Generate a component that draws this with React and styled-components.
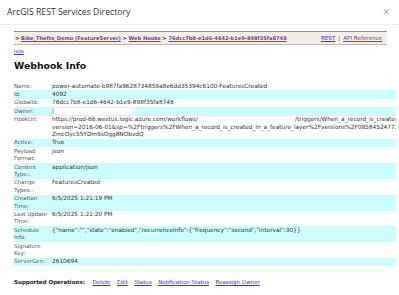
import React from "react";
import styled, { createGlobalStyle } from "styled-components";

const Global = createGlobalStyle`
  html, body { margin: 0; padding: 0; background: #fff; }
  body { width: 399px; height: 295px; overflow: hidden; }
`;

const Dialog = styled.div`
  width: 399px;
  height: 295px;
  display: flex;
  flex-direction: column;
  font-family: "DejaVu Sans", Verdana, sans-serif;
`;

const TitleBar = styled.div`
  height: 25px;
  box-sizing: border-box;
  border-bottom: 1px solid #ececec;
  display: flex;
  align-items: center;
  justify-content: space-between;
  padding: 0 9px 0 7px;
  font-family: "Open Sans", "Liberation Sans", sans-serif;
  font-size: 8.7px;
  color: #333;
`;

const Close = styled.span`
  font-size: 9px;
  color: #aaa;
  font-family: "DejaVu Sans", sans-serif;
`;

const Body = styled.div`
  padding: 6px 0 0 14px;
  display: flex;
  flex-direction: column;
`;

const Crumbs = styled.div`
  width: 373px;
  height: 14px;
  box-sizing: border-box;
  background: #f4eee6;
  border-top: 1.5px solid #8c8c8c;
  border-bottom: 1px solid #b8b8b8;
  display: flex;
  align-items: center;
  justify-content: space-between;
  padding: 0 5px 0 1px;
  font-size: 5.1px;
`;

const CrumbPath = styled.span`
  font-weight: bold;
  color: #222;
`;

const Link = styled.a`
  color: ${(p) => (p.$visited ? "#6b3fa0" : "#3333ee")};
  text-decoration: underline;
  font-weight: ${(p) => (p.$bold ? "bold" : "normal")};
`;

const RightLinks = styled.span`
  font-size: 5.6px;
`;

const Sep = styled.span`
  color: #555;
  margin: 0 3px;
`;

const JsonLink = styled.a`
  margin-top: 3.5px;
  font-size: 4px;
  color: #3333ee;
  text-decoration: underline;
  align-self: flex-start;
`;

const Heading = styled.h2`
  margin: 6px 0 0 0;
  font-size: 9.3px;
  font-weight: bold;
  color: #111;
  line-height: 11px;
`;

const Table = styled.table`
  margin-top: 11.5px;
  width: 382px;
  table-layout: fixed;
  border-collapse: collapse;
  font-size: 5.8px;
  color: #333;
`;

const Row = styled.tr`
  background: ${(p) => (p.$alt ? "#ccffff" : "transparent")};
`;

const Label = styled.td`
  width: 38px;
  padding: 0.5px 0;
  line-height: 7.4px;
  vertical-align: top;
  color: #555;
  white-space: nowrap;
  font-size: 5.5px;
`;

const Value = styled.td`
  padding: 0.5px 0 0.5px 0;
  line-height: 7.4px;
  vertical-align: top;
  white-space: nowrap;
  overflow: hidden;
`;

const OwnerBox = styled.span`
  display: inline-block;
  background: #fff;
  width: 81px;
  height: 7.4px;
  vertical-align: top;
`;

const Gap = styled.span`
  display: inline-block;
  width: ${(p) => p.$w}px;
`;

const Ops = styled.div`
  margin-top: 13px;
  font-size: 5.5px;
  display: flex;
  gap: 6.5px;
  align-items: baseline;
`;

const OpsLabel = styled.span`
  font-weight: bold;
  color: #222;
  margin-right: 1px;
`;

const hook = (
  <>
    https://prod-66.westus.logic.azure.com/workflows/
    <Gap $w={97} />
    /triggers/When_a_record_is_created_in_a_feature_layer/paths/invoke
    <br />
    version=2016-06-01&amp;sp=%2Ftriggers%2FWhen_a_record_is_created_in_a_feature_layer%2Fversions%2F085845247722
    <br />
    ZmcOyc5SYDm9sOgg8NObvdQ
  </>
);

const rows = [
  ["Name:", "power-automate-b987fa9628734859a8e6dd35394c6100-FeaturesCreated"],
  ["Id:", "4092"],
  ["GlobalId:", "76dcc7b8-e1d6-4642-b1e9-898f35fa8748"],
  ["Owner:", "__owner__"],
  ["HookUrl:", "__hook__"],
  ["Active:", "True"],
  [["Payload", "Format:"], "json"],
  [["Content", "Type::"], "application/json"],
  [["Change", "Types::"], "FeaturesCreated"],
  [["Creation", "Time:"], "6/5/2025 1:21:19 PM"],
  [["Last Update", "Time:"], "6/5/2025 1:21:20 PM"],
  [["Schedule", "Info:"], '{"name":"","state":"enabled","recurrenceInfo":{"frequency":"second","interval":30}}'],
  [["Signature", "Key:"], ""],
  ["ServerGen::", "2610694"],
];

const lines = (v) =>
  Array.isArray(v)
    ? v.map((l, i) => (
        <React.Fragment key={i}>
          {i > 0 && <br />}
          {l}
        </React.Fragment>
      ))
    : v;

const renderValue = (v) => {
  if (v === "__owner__") return <OwnerBox>|</OwnerBox>;
  if (v === "__hook__") return hook;
  return lines(v);
};

export default function App() {
  return (
    <>
      <Global />
      <Dialog>
        <TitleBar>
          <span>ArcGIS REST Services Directory</span>
          <Close>✕</Close>
        </TitleBar>
        <Body>
          <Crumbs>
            <CrumbPath>
              &gt; <Link $visited $bold>Bike_Thefts_Demo (FeatureServer)</Link> &gt;{" "}
              <Link $visited $bold>Web Hooks</Link> &gt;{" "}
              <Link $visited $bold>76dcc7b8-e1d6-4642-b1e9-898f35fa8748</Link>
            </CrumbPath>
            <RightLinks>
              <Link>REST</Link>
              <Sep>|</Sep>
              <Link $visited>API Reference</Link>
            </RightLinks>
          </Crumbs>
          <JsonLink>JSON</JsonLink>
          <Heading>Webhook Info</Heading>
          <Table>
            <tbody>
              {rows.map(([label, value], i) => (
                <Row key={i} $alt={i % 2 === 1}>
                  <Label>{lines(label)}</Label>
                  <Value>{renderValue(value)}</Value>
                </Row>
              ))}
            </tbody>
          </Table>
          <Ops>
            <OpsLabel>Supported Operations:</OpsLabel>
            <Link>Delete</Link>
            <Link>Edit</Link>
            <Link>Status</Link>
            <Link>Notification Status</Link>
            <Link>Reassign Owner</Link>
          </Ops>
        </Body>
      </Dialog>
    </>
  );
}
